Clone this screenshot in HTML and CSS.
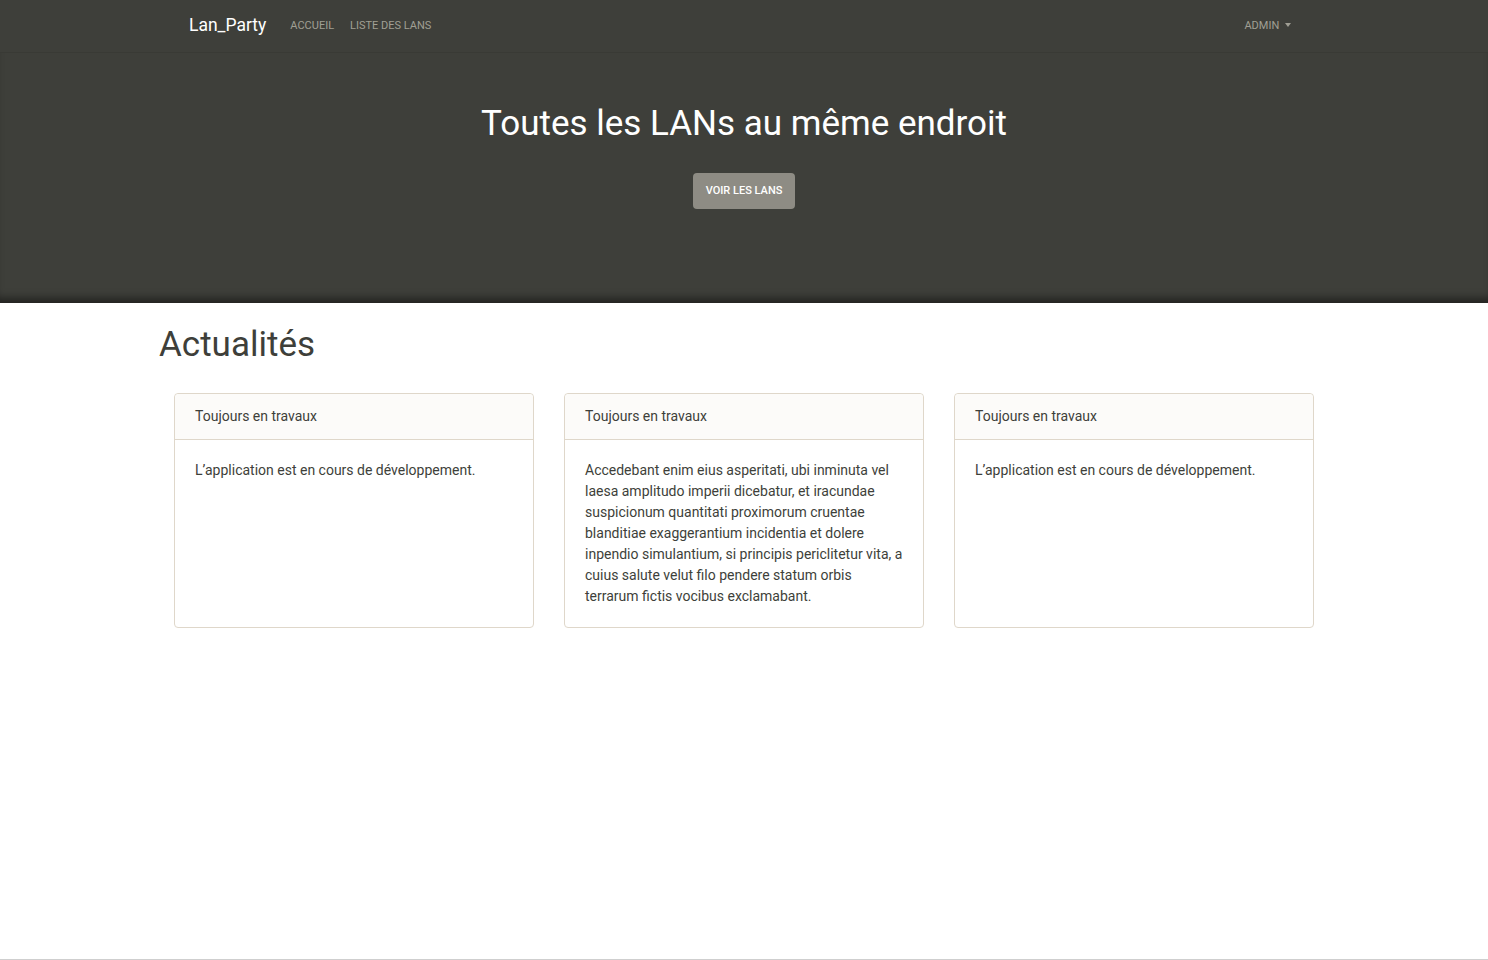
FILE: index.html
```html
<!DOCTYPE html>
<html lang="fr">
<head>
<meta charset="utf-8">
<title>Lan_Party</title>
<link rel="stylesheet" href="styles.css">
</head>
<body>
<nav class="navbar">
  <div class="container nav-inner">
    <a class="brand" href="#">Lan_Party</a>
    <ul class="nav-links">
      <li><a href="#">Accueil</a></li>
      <li><a href="#">Liste des LANs</a></li>
    </ul>
    <div class="nav-right">
      <a href="#" class="dropdown">Admin <span class="caret"></span></a>
    </div>
  </div>
</nav>
<header class="hero">
  <h1 class="hero-title">Toutes les LANs au même endroit</h1>
  <a href="#" class="btn">Voir les LANs</a>
</header>
<main class="container main">
  <h2 class="section-title">Actualités</h2>
  <div class="card-deck">
    <div class="card">
      <div class="card-header">Toujours en travaux</div>
      <div class="card-body">L’application est en cours de développement.</div>
    </div>
    <div class="card">
      <div class="card-header">Toujours en travaux</div>
      <div class="card-body">Accedebant enim eius asperitati, ubi inminuta vel laesa amplitudo imperii dicebatur, et iracundae suspicionum quantitati proximorum cruentae blanditiae exaggerantium incidentia et dolere inpendio simulantium, si principis periclitetur vita, a cuius salute velut filo pendere statum orbis terrarum fictis vocibus exclamabant.</div>
    </div>
    <div class="card">
      <div class="card-header">Toujours en travaux</div>
      <div class="card-body">L’application est en cours de développement.</div>
    </div>
  </div>
</main>
<footer class="footer"></footer>
</body>
</html>
```
FILE: styles.css
```css
* { box-sizing: border-box; }
html, body { margin: 0; padding: 0; }
body {
  font-family: Roboto, "Liberation Sans", sans-serif;
  font-size: 14px;
  line-height: 1.5;
  color: #3e3f3a;
  background: #fff;
  min-height: 100vh;
  display: flex;
  flex-direction: column;
}
a { text-decoration: none; }
.container {
  width: 1140px;
  margin: 0 auto;
}
.navbar {
  background: #3e3f3a;
  height: 53px;
  border-bottom: 1px solid #393a35;
}
.nav-inner {
  display: flex;
  align-items: center;
  height: 52px;
  padding: 0 15px;
}
.brand {
  color: #fff;
  font-size: 17.5px;
  margin-right: 16px;
  line-height: 1;
}
.nav-links {
  list-style: none;
  display: flex;
  margin: 0;
  padding: 0;
}
.nav-links a, .dropdown {
  display: block;
  padding: 0 8px;
  font-size: 11px;
  font-weight: 400;
  text-transform: uppercase;
  color: #a09f94;
  line-height: 22px;
}
.nav-right { margin-left: auto; }
.caret {
  display: inline-block;
  width: 0;
  height: 0;
  margin-left: 3px;
  vertical-align: 2px;
  border-top: 4px solid #a09f94;
  border-left: 3.5px solid transparent;
  border-right: 3.5px solid transparent;
}
.hero {
  background: #3e3f3a;
  height: 250px;
  display: flex;
  flex-direction: column;
  align-items: center;
  box-shadow: inset 0 -10px 8px -5px rgba(0,0,0,0.45);
}
.hero-title {
  margin: 49px 0 0;
  font-size: 35px;
  font-weight: 400;
  line-height: 44px;
  color: #fff;
}
.btn {
  margin-top: 27px;
  display: inline-block;
  width: 102px;
  height: 36px;
  line-height: 36px;
  text-align: center;
  background: #8e8c84;
  color: #fff;
  border-radius: 4px;
  font-size: 11px;
  font-weight: 500;
  text-transform: uppercase;
}
.main { padding: 0; }
.section-title {
  margin: 20px 0 0 -15px;
  font-size: 35px;
  font-weight: 400;
  line-height: 43px;
  color: #3e3f3a;
}
.card-deck {
  display: flex;
  gap: 30px;
  margin-top: 27px;
}
.card {
  flex: 1;
  border: 1px solid #dfd7ca;
  border-radius: 4px;
  background: #fff;
}
.card-header {
  padding: 12px 20px;
  background: #fcfbf9;
  border-bottom: 1px solid #dfd7ca;
  border-radius: 4px 4px 0 0;
  line-height: 21px;
}
.card-body {
  padding: 20px;
  line-height: 21px;
}
.footer {
  margin-top: auto;
  height: 1px;
  background: #cfcfcf;
}
```
